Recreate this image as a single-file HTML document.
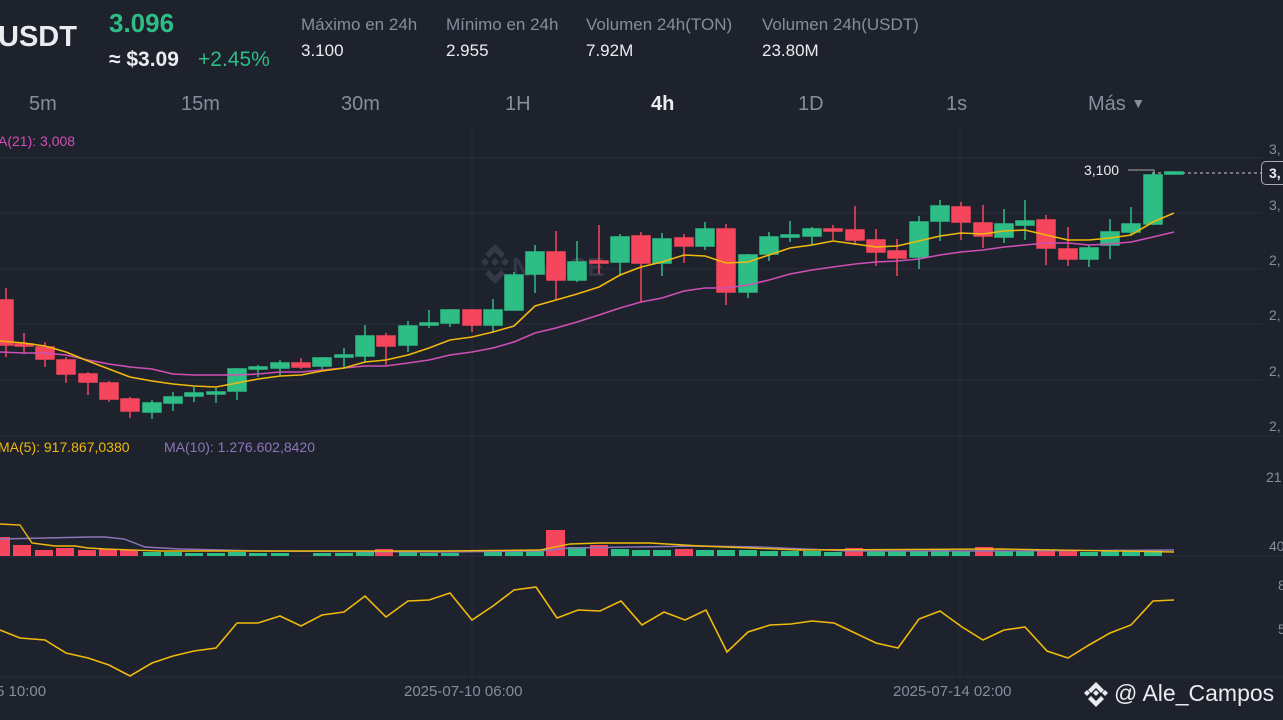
<!DOCTYPE html>
<html><head><meta charset="utf-8"><style>
body{margin:0;width:1283px;height:720px;background:#1e222d;overflow:hidden;font-family:"Liberation Sans",sans-serif;position:relative}
.t{position:absolute;white-space:nowrap}
.lab{color:#848e9c;font-size:17px}
.val{color:#eaecef;font-size:17px}
.tf{position:absolute;top:93px;font-size:20px;color:#848e9c}
</style></head><body>
<div class="t" style="left:-2px;top:21px;font-size:29px;font-weight:bold;color:#eaecef">USDT</div>
<div class="t" style="left:109px;top:8px;font-size:26px;font-weight:bold;color:#2ebd85">3.096</div>
<div class="t" style="left:109px;top:48px;font-size:21px;color:#eaecef;font-weight:bold">≈ $3.09</div>
<div class="t" style="left:198px;top:48px;font-size:21px;color:#2ebd85">+2.45%</div>
<div class="t lab" style="left:301px;top:15px">Máximo en 24h</div>
<div class="t val" style="left:301px;top:41px">3.100</div>
<div class="t lab" style="left:446px;top:15px">Mínimo en 24h</div>
<div class="t val" style="left:446px;top:41px">2.955</div>
<div class="t lab" style="left:586px;top:15px">Volumen 24h(TON)</div>
<div class="t val" style="left:586px;top:41px">7.92M</div>
<div class="t lab" style="left:762px;top:15px">Volumen 24h(USDT)</div>
<div class="t val" style="left:762px;top:41px">23.80M</div>
<div class="tf" style="left:29px">5m</div>
<div class="tf" style="left:181px">15m</div>
<div class="tf" style="left:341px">30m</div>
<div class="tf" style="left:505px">1H</div>
<div class="tf" style="left:651px;color:#eaecef;font-weight:bold">4h</div>
<div class="tf" style="left:798px">1D</div>
<div class="tf" style="left:946px">1s</div>
<div class="tf" style="left:1088px">Más <span style="font-size:14px;position:relative;top:-2px">▼</span></div>
<div class="t" style="left:-2px;top:133px;font-size:14px;color:#d04fb5">A(21): 3,008</div>
<div class="t" style="left:-2px;top:439px;font-size:14px;color:#f0b90b">MA(5): 917.867,0380</div>
<div class="t" style="left:164px;top:439px;font-size:14px;color:#8e75b9">MA(10): 1.276.602,8420</div>
<div class="t" style="left:-4px;top:683px;font-size:15px;color:#848e9c">5 10:00</div>
<div class="t" style="left:404px;top:683px;font-size:15px;color:#848e9c">2025-07-10 06:00</div>
<div class="t" style="left:893px;top:683px;font-size:15px;color:#848e9c">2025-07-14 02:00</div>
<div class="t" style="left:1114px;top:680px;font-size:23px;color:#eaecef">@ Ale_Campos</div>
<div class="t" style="left:1269px;top:141px;font-size:14px;color:#848e9c">3,</div>
<div class="t" style="left:1269px;top:197px;font-size:14px;color:#848e9c">3,</div>
<div class="t" style="left:1269px;top:252px;font-size:14px;color:#848e9c">2,</div>
<div class="t" style="left:1269px;top:307px;font-size:14px;color:#848e9c">2,</div>
<div class="t" style="left:1269px;top:363px;font-size:14px;color:#848e9c">2,</div>
<div class="t" style="left:1269px;top:418px;font-size:14px;color:#848e9c">2,</div>
<div class="t" style="left:1266px;top:469px;font-size:14px;color:#848e9c">21</div>
<div class="t" style="left:1269px;top:538px;font-size:14px;color:#848e9c">40</div>
<div class="t" style="left:1278px;top:577px;font-size:14px;color:#848e9c">8</div>
<div class="t" style="left:1278px;top:621px;font-size:14px;color:#848e9c">5</div>
<div class="t" style="left:1084px;top:162px;font-size:14px;color:#eaecef">3,100</div>
<div class="t" style="left:1261px;top:161px;width:30px;height:24px;border:1px solid #aaa;border-radius:5px;font-size:14px;color:#eaecef;padding:3px 0 0 7px;box-sizing:border-box;font-weight:bold">3,</div>
<svg width="1283" height="720" style="position:absolute;left:0;top:0">
<g stroke="#2a2f3b" stroke-width="1">
<line x1="0" y1="158" x2="1262" y2="158"/><line x1="0" y1="213" x2="1262" y2="213"/><line x1="0" y1="269" x2="1262" y2="269"/><line x1="0" y1="324" x2="1262" y2="324"/><line x1="0" y1="380" x2="1262" y2="380"/><line x1="0" y1="436" x2="1283" y2="436"/><line x1="0" y1="556" x2="1283" y2="556"/><line x1="0" y1="677" x2="1283" y2="677"/>
<line x1="472" y1="127" x2="472" y2="677"/><line x1="960" y1="127" x2="960" y2="677"/>
</g>
<g fill="#343945"><path d="M495 244l10 10-4 4-6-6-6 6-4-4z"/><path d="M495 258l4 4-4 4-4-4z"/><path d="M481 262l4-4 4 4-4 4z"/><path d="M501 262l4-4 4 4-4 4z"/><path d="M489 270l6 6 6-6 4 4-10 10-10-10z"/><text x="512" y="276" font-size="26" font-weight="bold" font-family="Liberation Sans">NANCE</text></g>
<line x1="1152" y1="173" x2="1262" y2="173" stroke="#ccc" stroke-dasharray="3,3"/>
<polyline points="1128,170 1154,170 1154,175" fill="none" stroke="#aaa"/>
<g stroke-width="1.5">
<g stroke="#f6465d" fill="#f6465d">
<line x1="6" y1="288" x2="6" y2="357"/><rect x="-3" y="300" width="16" height="45"/>
<line x1="24" y1="333" x2="24" y2="354"/><rect x="15" y="344" width="18" height="2"/>
<line x1="45" y1="342" x2="45" y2="367"/><rect x="36" y="347" width="18" height="12"/>
<line x1="66" y1="357" x2="66" y2="383"/><rect x="57" y="360" width="18" height="14"/>
<line x1="88" y1="372" x2="88" y2="395"/><rect x="79" y="374" width="18" height="8"/>
<line x1="109" y1="381" x2="109" y2="402"/><rect x="100" y="383" width="18" height="16"/>
<line x1="130" y1="397" x2="130" y2="418"/><rect x="121" y="399" width="18" height="12"/>
<line x1="301" y1="358" x2="301" y2="369"/><rect x="292" y="363" width="18" height="4"/>
<line x1="386" y1="333" x2="386" y2="365"/><rect x="377" y="336" width="18" height="10"/>
<line x1="472" y1="309" x2="472" y2="332"/><rect x="463" y="310" width="18" height="15"/>
<line x1="556" y1="231" x2="556" y2="300"/><rect x="547" y="252" width="18" height="28"/>
<line x1="599" y1="225" x2="599" y2="274"/><rect x="590" y="261" width="18" height="2"/>
<line x1="641" y1="232" x2="641" y2="302"/><rect x="632" y="236" width="18" height="27"/>
<line x1="684" y1="234" x2="684" y2="263"/><rect x="675" y="238" width="18" height="8"/>
<line x1="726" y1="224" x2="726" y2="305"/><rect x="717" y="229" width="18" height="63"/>
<line x1="833" y1="225" x2="833" y2="240"/><rect x="824" y="229" width="18" height="2"/>
<line x1="855" y1="206" x2="855" y2="245"/><rect x="846" y="230" width="18" height="10"/>
<line x1="876" y1="229" x2="876" y2="266"/><rect x="867" y="240" width="18" height="12"/>
<line x1="897" y1="239" x2="897" y2="276"/><rect x="888" y="251" width="18" height="7"/>
<line x1="961" y1="202" x2="961" y2="240"/><rect x="952" y="207" width="18" height="15"/>
<line x1="983" y1="205" x2="983" y2="248"/><rect x="974" y="223" width="18" height="13"/>
<line x1="1046" y1="215" x2="1046" y2="265"/><rect x="1037" y="220" width="18" height="28"/>
<line x1="1068" y1="227" x2="1068" y2="266"/><rect x="1059" y="249" width="18" height="10"/>
</g>
<g stroke="#2ebd85" fill="#2ebd85">
<line x1="152" y1="400" x2="152" y2="419"/><rect x="143" y="403" width="18" height="9"/>
<line x1="173" y1="392" x2="173" y2="411"/><rect x="164" y="397" width="18" height="6"/>
<line x1="194" y1="387" x2="194" y2="402"/><rect x="185" y="393" width="18" height="3"/>
<line x1="216" y1="388" x2="216" y2="403"/><rect x="207" y="392" width="18" height="2"/>
<line x1="237" y1="368" x2="237" y2="400"/><rect x="228" y="369" width="18" height="22"/>
<line x1="258" y1="365" x2="258" y2="377"/><rect x="249" y="367" width="18" height="2"/>
<line x1="280" y1="360" x2="280" y2="375"/><rect x="271" y="363" width="18" height="5"/>
<line x1="322" y1="357" x2="322" y2="371"/><rect x="313" y="358" width="18" height="8"/>
<line x1="344" y1="348" x2="344" y2="367"/><rect x="335" y="355" width="18" height="2"/>
<line x1="365" y1="325" x2="365" y2="362"/><rect x="356" y="336" width="18" height="20"/>
<line x1="408" y1="321" x2="408" y2="352"/><rect x="399" y="326" width="18" height="19"/>
<line x1="429" y1="310" x2="429" y2="328"/><rect x="420" y="323" width="18" height="2"/>
<line x1="450" y1="309" x2="450" y2="327"/><rect x="441" y="310" width="18" height="13"/>
<line x1="493" y1="299" x2="493" y2="333"/><rect x="484" y="310" width="18" height="15"/>
<line x1="514" y1="272" x2="514" y2="310"/><rect x="505" y="275" width="18" height="35"/>
<line x1="535" y1="245" x2="535" y2="293"/><rect x="526" y="252" width="18" height="22"/>
<line x1="577" y1="241" x2="577" y2="282"/><rect x="568" y="262" width="18" height="18"/>
<line x1="620" y1="234" x2="620" y2="276"/><rect x="611" y="237" width="18" height="25"/>
<line x1="662" y1="233" x2="662" y2="276"/><rect x="653" y="239" width="18" height="24"/>
<line x1="705" y1="222" x2="705" y2="250"/><rect x="696" y="229" width="18" height="17"/>
<line x1="748" y1="254" x2="748" y2="298"/><rect x="739" y="255" width="18" height="37"/>
<line x1="769" y1="232" x2="769" y2="261"/><rect x="760" y="237" width="18" height="17"/>
<line x1="790" y1="221" x2="790" y2="242"/><rect x="781" y="235" width="18" height="2"/>
<line x1="812" y1="227" x2="812" y2="245"/><rect x="803" y="229" width="18" height="7"/>
<line x1="919" y1="216" x2="919" y2="269"/><rect x="910" y="222" width="18" height="35"/>
<line x1="940" y1="200" x2="940" y2="241"/><rect x="931" y="206" width="18" height="15"/>
<line x1="1004" y1="209" x2="1004" y2="243"/><rect x="995" y="224" width="18" height="13"/>
<line x1="1025" y1="200" x2="1025" y2="240"/><rect x="1016" y="221" width="18" height="4"/>
<line x1="1089" y1="245" x2="1089" y2="267"/><rect x="1080" y="248" width="18" height="11"/>
<line x1="1110" y1="219" x2="1110" y2="259"/><rect x="1101" y="232" width="18" height="13"/>
<line x1="1131" y1="207" x2="1131" y2="235"/><rect x="1122" y="224" width="18" height="8"/>
<line x1="1153" y1="173" x2="1153" y2="225"/><rect x="1144" y="175" width="18" height="49"/>
<rect x="1165" y="172" width="18" height="2"/>
</g>
</g>
<polyline fill="none" stroke="#d04fb5" stroke-width="1.6" points="0,352 24,353 45,353 66,355 88,360 109,364 130,367 152,369 173,374 194,375 216,375 237,375 258,374 280,372 301,372 322,370 344,368 365,366 386,366 408,363 429,360 450,355 472,352 493,348 514,342 535,333 556,328 577,322 599,315 620,308 641,302 662,298 684,291 705,288 726,288 748,285 769,280 790,274 812,270 833,267 855,264 876,262 897,261 919,259 940,255 961,252 983,250 1004,247 1025,245 1046,243 1068,243 1089,245 1110,244 1131,242 1153,237 1174,232"/>
<polyline fill="none" stroke="#f0b90b" stroke-width="1.6" points="0,341 24,343 45,346 66,352 88,361 109,369 130,377 152,381 173,384 194,386 216,387 237,383 258,379 280,376 301,375 322,371 344,368 365,362 386,360 408,355 429,348 450,340 472,337 493,332 514,326 535,306 556,300 577,294 599,287 620,275 641,267 662,262 684,255 705,256 726,263 748,262 769,255 790,248 812,245 833,241 855,244 876,247 897,246 919,241 940,236 961,233 983,234 1004,231 1025,230 1046,235 1068,240 1089,240 1110,238 1131,235 1153,222 1174,213"/>
<g>
<g fill="#f6465d"><rect x="-3" y="537" width="13" height="19"/><rect x="13" y="545" width="18" height="11"/><rect x="35" y="550" width="18" height="6"/><rect x="56" y="548" width="18" height="8"/><rect x="78" y="550" width="18" height="6"/><rect x="99" y="549" width="18" height="7"/><rect x="120" y="550" width="18" height="6"/><rect x="375" y="549" width="18" height="7"/><rect x="546" y="530" width="19" height="26"/><rect x="590" y="545" width="18" height="11"/><rect x="675" y="549" width="18" height="7"/><rect x="845" y="548" width="18" height="8"/><rect x="975" y="547" width="18" height="9"/><rect x="1037" y="550" width="18" height="6"/><rect x="1059" y="551" width="18" height="5"/></g>
<g fill="#2ebd85"><rect x="143" y="552" width="18" height="4"/><rect x="164" y="552" width="18" height="4"/><rect x="185" y="553" width="18" height="3"/><rect x="207" y="553" width="18" height="3"/><rect x="228" y="552" width="18" height="4"/><rect x="249" y="553" width="18" height="3"/><rect x="271" y="553" width="18" height="3"/><rect x="313" y="553" width="18" height="3"/><rect x="335" y="553" width="18" height="3"/><rect x="356" y="552" width="18" height="4"/><rect x="399" y="552" width="18" height="4"/><rect x="420" y="553" width="18" height="3"/><rect x="441" y="553" width="18" height="3"/><rect x="484" y="550" width="18" height="6"/><rect x="505" y="550" width="18" height="6"/><rect x="526" y="550" width="18" height="6"/><rect x="568" y="547" width="18" height="9"/><rect x="611" y="549" width="18" height="7"/><rect x="632" y="550" width="18" height="6"/><rect x="653" y="550" width="18" height="6"/><rect x="696" y="550" width="18" height="6"/><rect x="717" y="550" width="18" height="6"/><rect x="739" y="550" width="18" height="6"/><rect x="760" y="551" width="18" height="5"/><rect x="781" y="551" width="18" height="5"/><rect x="803" y="551" width="18" height="5"/><rect x="824" y="552" width="18" height="4"/><rect x="867" y="551" width="18" height="5"/><rect x="888" y="551" width="18" height="5"/><rect x="910" y="551" width="18" height="5"/><rect x="931" y="550" width="18" height="6"/><rect x="952" y="551" width="18" height="5"/><rect x="995" y="551" width="18" height="5"/><rect x="1016" y="551" width="18" height="5"/><rect x="1080" y="552" width="18" height="4"/><rect x="1101" y="550" width="18" height="6"/><rect x="1122" y="550" width="18" height="6"/><rect x="1144" y="550" width="18" height="6"/></g>
</g>
<polyline fill="none" stroke="#8e75b9" stroke-width="1.4" points="0,539 90,537 105,537 124,539 145,547 180,549 260,551 440,552 540,551 570,548 700,546 760,547 850,551 1000,551 1174,550"/>
<polyline fill="none" stroke="#f0b90b" stroke-width="1.4" points="0,524 20,525 32,543 55,546 75,546 88,548 105,549 160,551 440,551 540,550 570,544 600,543 650,543 700,546 800,550 1000,549 1174,552"/>
<polyline fill="none" stroke="#f0b90b" stroke-width="1.6" points="0,630 20,638 45,640 66,653 88,658 109,665 130,676 152,663 173,656 194,651 216,648 237,623 258,623 280,616 301,626 322,615 344,612 365,596 386,617 408,601 429,600 450,593 472,620 493,606 514,590 536,587 557,618 578,610 600,611 621,601 642,625 664,612 685,620 706,610 727,652 748,632 770,625 791,624 812,621 834,623 855,633 876,643 898,648 919,619 940,611 962,627 983,640 1004,630 1025,627 1047,651 1068,658 1089,645 1110,633 1131,625 1153,601 1174,600"/>
<g fill="#eaecef"><path d="M1096 682l8 8-3 3-5-5-5 5-3-3z"/><path d="M1096 690l3 3-3 3-3-3z"/><path d="M1084 693l3-3 3 3-3 3z"/><path d="M1102 693l3-3 3 3-3 3z"/><path d="M1091 696l5 5 5-5 3 3-8 8-8-8z"/></g>
</svg>
</body></html>
